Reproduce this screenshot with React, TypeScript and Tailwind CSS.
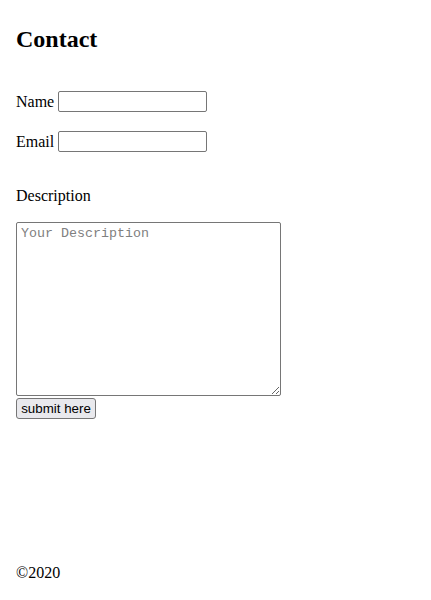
export default function App() {
  return (
    <div className="w-[431px] h-[600px] bg-white text-black px-4 flex flex-col" style={{ fontFamily: '"Liberation Serif", "Times New Roman", serif' }}>
      <h2 className="mt-[25px] text-[24px] leading-[28px] font-bold">Contact</h2>
      <div className="mt-[38px] h-[21px] flex items-center">
        <span className="text-[16px] leading-[18px]">Name</span>
        <input type="text" className="ml-[4px] w-[149px] h-[21px] border border-[#767676] rounded-[2px] px-[2px] text-[13.33px] bg-white" />
      </div>
      <div className="mt-[19px] h-[21px] flex items-center">
        <span className="text-[16px] leading-[18px]">Email</span>
        <input type="text" className="ml-[4px] w-[149px] h-[21px] border border-[#767676] rounded-[2px] px-[2px] text-[13.33px] bg-white" />
      </div>
      <div className="mt-[35px] text-[16px] leading-[18px]">Description</div>
      <textarea
        placeholder="Your Description"
        className="mt-[17px] w-[265px] h-[174px] border border-[#767676] rounded-[2px] pl-[4px] pr-[2px] pt-[3px] pb-[2px] text-[13.33px] leading-[15px] placeholder:text-[#808080] block"
        style={{ fontFamily: '"Liberation Mono", "Courier New", monospace' }}
      />
      <div className="mt-[2px] flex">
        <button
          className="h-[21px] w-[80px] flex items-center justify-center whitespace-nowrap border border-[#767676] rounded-[3px] bg-[#e9e9ed] text-[13.33px] leading-[15px] px-0 text-black"
          style={{ fontFamily: '"Liberation Sans", Arial, sans-serif' }}
        >
          submit here
        </button>
      </div>
      <div className="mt-[145px] text-[16px] leading-[18px]">©2020</div>
    </div>
  );
}
